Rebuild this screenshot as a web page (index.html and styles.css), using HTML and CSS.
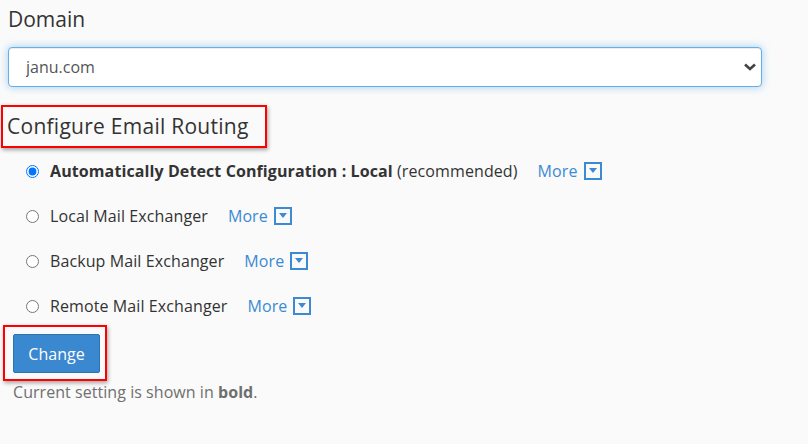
FILE: index.html
```html
<!DOCTYPE html>
<html lang="en">
<head>
<meta charset="utf-8">
<title>Email Routing</title>
<link rel="stylesheet" href="styles.css">
</head>
<body>
<div class="page">
  <h2 class="section-title">Domain</h2>
  <div class="select-wrap">
    <select class="domain-select"><option>janu.com</option></select>
    <svg class="chevron" width="14" height="10" viewBox="0 0 14 10"><path d="M2 2.5 L7 7 L12 2.5" fill="none" stroke="#444" stroke-width="2.6"/></svg>
  </div>
  <div class="callout callout-heading"><h2 class="section-title title-wide">Configure Email Routing</h2></div>
  <ul class="options">
    <li class="option">
      <label class="option-label"><input type="radio" name="routing" checked><span class="option-text"><b>Automatically Detect Configuration : Local</b> (recommended)</span></label>
      <a class="more" href="#">More<span class="more-icon"><span class="caret"></span></span></a>
    </li>
    <li class="option">
      <label class="option-label"><input type="radio" name="routing"><span class="option-text">Local Mail Exchanger</span></label>
      <a class="more" href="#">More<span class="more-icon"><span class="caret"></span></span></a>
    </li>
    <li class="option">
      <label class="option-label"><input type="radio" name="routing"><span class="option-text">Backup Mail Exchanger</span></label>
      <a class="more" href="#">More<span class="more-icon"><span class="caret"></span></span></a>
    </li>
    <li class="option">
      <label class="option-label"><input type="radio" name="routing"><span class="option-text">Remote Mail Exchanger</span></label>
      <a class="more" href="#">More<span class="more-icon"><span class="caret"></span></span></a>
    </li>
  </ul>
  <div class="callout callout-button"><button class="btn" type="button">Change</button></div>
  <p class="note">Current setting is shown in <b>bold</b>.</p>
</div>
</body>
</html>
```

FILE: styles.css
```css
* { box-sizing: border-box; }
html, body { margin: 0; padding: 0; }
body {
  background: #fafafa;
  color: #333;
  font-family: "Open Sans", "Liberation Sans", sans-serif;
  font-size: 16px;
}
.page {
  padding: 5px 0 0 8px;
  width: 762px;
}
.section-title {
  margin: 0;
  font-size: 21px;
  font-weight: 400;
  line-height: 28px;
  color: #333;
}
.title-wide { letter-spacing: 0.26px; }
.select-wrap {
  position: relative;
  margin-top: 14px;
}
.domain-select {
  display: block;
  width: 100%;
  height: 40px;
  -webkit-appearance: none;
  appearance: none;
  background: #fff;
  border: 1px solid #66afe9;
  border-radius: 4px;
  box-shadow: inset 0 1px 1px rgba(0,0,0,.075), 0 0 8px rgba(102,175,233,.6);
  padding: 0 17px;
  font-family: inherit;
  font-size: 16px;
  color: #555;
  outline: none;
}
.chevron {
  position: absolute;
  right: 5px;
  top: 15px;
  pointer-events: none;
}
.callout {
  display: inline-block;
  border: 2px solid #f00;
  box-shadow: 1px 2px 4px rgba(0,0,0,.35);
}
.callout-heading {
  margin: 18px 0 0 -7px;
  padding: 5px 16px 6px 4px;
}
.options {
  list-style: none;
  margin: 5px 0 0;
  padding: 0;
  display: flex;
  flex-direction: column;
  gap: 9px;
  letter-spacing: 0.1px;
}
.option {
  height: 36px;
  display: flex;
  align-items: center;
  padding-left: 18px;
}
.option-label {
  display: flex;
  align-items: center;
}
.option-label input {
  margin: 0 11px 0 0;
  width: 13px;
  height: 13px;
}
.option-text b { font-weight: 700; }
.more {
  margin-left: 20px;
  color: #3a8ad4;
  text-decoration: none;
  display: inline-flex;
  align-items: center;
  gap: 6px;
}
.more-icon {
  width: 18px;
  height: 18px;
  border: 2px solid #3a8ad4;
  display: inline-flex;
  justify-content: center;
  align-items: center;
  padding-bottom: 2px;
}
.caret {
  width: 0;
  height: 0;
  border-left: 4.5px solid transparent;
  border-right: 4.5px solid transparent;
  border-top: 5px solid #3a8ad4;
}
.callout-button {
  display: block;
  width: 104px;
  margin: 1px 0 0 -5px;
  padding: 7px 4px 6px 8px;
}
.btn {
  display: block;
  width: 87px;
  height: 39px;
  background: #3a88cf;
  border: 1px solid #2f72b1;
  border-radius: 2px;
  color: #fff;
  font-family: inherit;
  font-size: 16px;
  padding: 0;
}
.note {
  margin: 0;
  padding-left: 5px;
  color: #6f6f6f;
  line-height: 22px;
  letter-spacing: 0.05px;
}
.note b { font-weight: 700; }
```
